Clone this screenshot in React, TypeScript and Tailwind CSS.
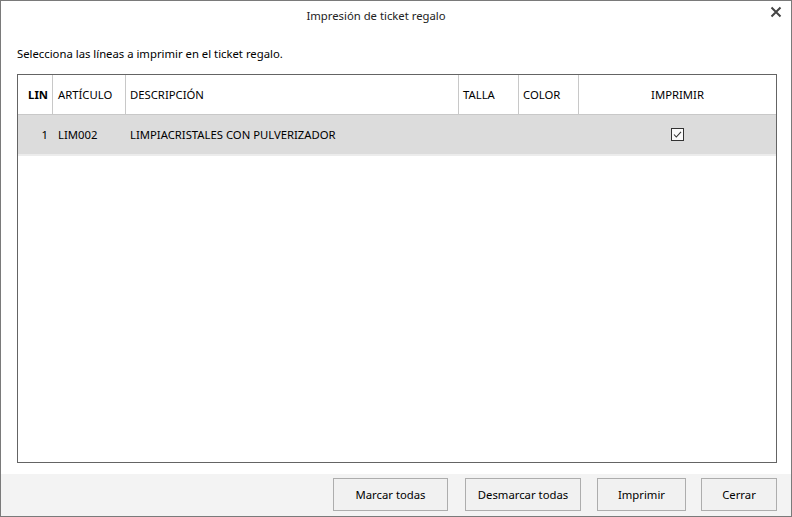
import React from "react";

const font = { fontFamily: '"Noto Sans", "Open Sans", sans-serif' };

function Btn({ label, w, ml }: { label: string; w: string; ml: string }) {
  return (
    <button
      className={`${w} ${ml} h-[33px] border border-[#adadad] bg-[#f1f1f1] text-[11.3px] text-black flex items-center justify-center pt-[2px]`}
    >
      {label}
    </button>
  );
}

export default function App() {
  return (
    <div
      className="w-[792px] h-[517px] border border-[#7a7a7a] bg-white flex flex-col text-[11.3px] text-black"
      style={font}
    >
      <div className="h-[31px] relative flex items-center justify-center pr-[40px] text-[#222]">
        <span>Impresión de ticket regalo</span>
        <svg
          className="absolute left-[769px] top-[5px]"
          width="12"
          height="12"
          viewBox="0 0 12 12"
        >
          <path d="M1.5 1.5 L10.5 10.5 M10.5 1.5 L1.5 10.5" stroke="#444" strokeWidth="2" />
        </svg>
      </div>
      <div className="h-[42px] flex items-center pl-[16px] pt-[2px]">
        <span>Selecciona las líneas a imprimir en el ticket regalo.</span>
      </div>
      <div className="ml-[16px] w-[760px] h-[389px] border border-[#646464] flex flex-col">
        <div className="grid grid-cols-[35px_73px_333px_60px_60px_1fr] h-[40px] border-b border-[#c8c8c8]">
          <div className="border-r border-[#c8c8c8] flex items-center justify-end pr-[4px] pt-[2px] font-bold">LIN</div>
          <div className="border-r border-[#c8c8c8] flex items-center pl-[5px] pt-[2px]">ARTÍCULO</div>
          <div className="border-r border-[#c8c8c8] flex items-center pl-[4px] pt-[2px]">DESCRIPCIÓN</div>
          <div className="border-r border-[#c8c8c8] flex items-center pl-[4px] pt-[2px]">TALLA</div>
          <div className="border-r border-[#c8c8c8] flex items-center pl-[4px] pt-[2px]">COLOR</div>
          <div className="flex items-center justify-center pt-[2px]">IMPRIMIR</div>
        </div>
        <div className="grid grid-cols-[35px_73px_333px_60px_60px_1fr] h-[39px] bg-[#dcdcdc]">
          <div className="flex items-center justify-end pr-[5px] pt-[2px]">1</div>
          <div className="flex items-center pl-[5px] pt-[2px]">LIM002</div>
          <div className="flex items-center pl-[4px] pt-[2px]">LIMPIACRISTALES CON PULVERIZADOR</div>
          <div />
          <div />
          <div className="flex items-center justify-center">
            <svg width="13" height="13" viewBox="0 0 13 13">
              <rect x="0.5" y="0.5" width="12" height="12" fill="#fafafa" stroke="#333" />
              <path d="M3 6.5 L5.3 9 L10 3.8" fill="none" stroke="#333" strokeWidth="1.1" />
            </svg>
          </div>
        </div>
        <div className="h-[2px] bg-[#ececec]" />
      </div>
      <div className="h-[11px]" />
      <div className="h-[42px] bg-[#f3f3f3] flex items-start pt-[4px] pl-[332px]">
        <Btn label="Marcar todas" w="w-[115px]" ml="ml-0" />
        <Btn label="Desmarcar todas" w="w-[116px]" ml="ml-[17px]" />
        <Btn label="Imprimir" w="w-[89px]" ml="ml-[16px]" />
        <Btn label="Cerrar" w="w-[76px]" ml="ml-[15px]" />
      </div>
    </div>
  );
}
